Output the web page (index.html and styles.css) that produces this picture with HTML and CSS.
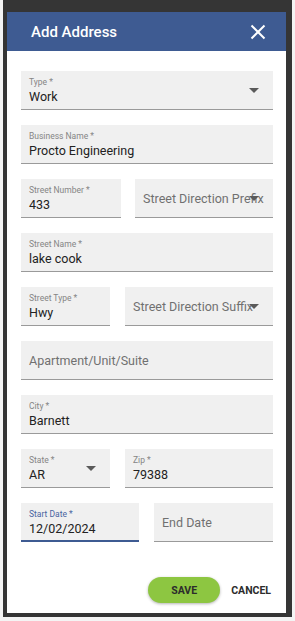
FILE: index.html
```html
<!DOCTYPE html>
<html lang="en">
<head>
    <meta charset="UTF-8">
    <meta name="viewport" content="width=device-width, initial-scale=1.0">
    <title>Add Address</title>
    <link rel="stylesheet" href="styles.css">
</head>
<body>

    <div class="dialog">
        <div class="dialog-header">
            <h1>Add Address</h1>
            <button class="close-btn" aria-label="Close">
                <svg width="16" height="16" viewBox="0 0 16 16">
                    <path d="M1.5 1.5 L14.5 14.5 M14.5 1.5 L1.5 14.5" stroke="#fff" stroke-width="2" fill="none"/>
                </svg>
            </button>
        </div>

        <div class="dialog-body">
            <div class="field select">
                <span class="label">Type *</span>
                <span class="value">Work</span>
                <span class="arrow"></span>
            </div>

            <div class="field">
                <span class="label">Business Name *</span>
                <span class="value">Procto Engineering</span>
            </div>

            <div class="row row-number">
                <div class="field">
                    <span class="label">Street Number *</span>
                    <span class="value">433</span>
                </div>
                <div class="field select empty">
                    <span class="placeholder">Street Direction Prefix</span>
                    <span class="arrow"></span>
                </div>
            </div>

            <div class="field">
                <span class="label">Street Name *</span>
                <span class="value">lake cook</span>
            </div>

            <div class="row row-type">
                <div class="field">
                    <span class="label">Street Type *</span>
                    <span class="value">Hwy</span>
                </div>
                <div class="field select empty">
                    <span class="placeholder">Street Direction Suffix</span>
                    <span class="arrow"></span>
                </div>
            </div>

            <div class="field empty">
                <span class="placeholder">Apartment/Unit/Suite</span>
            </div>

            <div class="field">
                <span class="label">City *</span>
                <span class="value">Barnett</span>
            </div>

            <div class="row row-type">
                <div class="field select">
                    <span class="label">State *</span>
                    <span class="value">AR</span>
                    <span class="arrow"></span>
                </div>
                <div class="field">
                    <span class="label">Zip *</span>
                    <span class="value">79388</span>
                </div>
            </div>

            <div class="row row-date">
                <div class="field focused">
                    <span class="label">Start Date *</span>
                    <span class="value">12/02/2024</span>
                </div>
                <div class="field empty">
                    <span class="placeholder">End Date</span>
                </div>
            </div>
        </div>

        <div class="dialog-actions">
            <button class="save-btn">SAVE</button>
            <button class="cancel-btn">CANCEL</button>
        </div>
    </div>

</body>
</html>
```

FILE: styles.css
```css
body {
    margin: 0;
    padding: 0 3px 4px 3px;
    background-color: #f4f4f4;
    font-family: Roboto, "Liberation Sans", sans-serif;
}

.dialog {
    height: 601px;
    background-color: #fff;
    border-style: solid;
    border-color: #353535;
    border-width: 12px 6px 4px 4px;
    display: flex;
    flex-direction: column;
}

.dialog-header {
    height: 39px;
    background-color: #3e5b92;
    display: flex;
    align-items: center;
    justify-content: space-between;
    padding: 0 20px 0 24px;
}

.dialog-header h1 {
    margin: 0;
    color: #fff;
    font-size: 15px;
    font-weight: 500;
}

.close-btn {
    background: none;
    border: none;
    padding: 0;
    display: flex;
    cursor: pointer;
}

.dialog-body {
    display: flex;
    flex-direction: column;
    gap: 15px;
    padding: 20px 13px 0 14px;
}

.row {
    display: grid;
    gap: 14px;
}

.row-number {
    grid-template-columns: 100px 1fr;
}

.row-type {
    grid-template-columns: 89px 1fr;
    gap: 15px;
}

.row-date {
    grid-template-columns: 118px 1fr;
    gap: 15px;
}

.field {
    position: relative;
    box-sizing: border-box;
    height: 39px;
    background-color: #f0f0f0;
    border-bottom: 1px solid #9a9a9a;
    padding: 6px 8px 0;
    display: flex;
    flex-direction: column;
    overflow: hidden;
}

.field.empty {
    justify-content: center;
    padding-top: 0;
}

.field.focused {
    border-bottom: 2px solid #3e5b92;
}

.label {
    font-size: 8.5px;
    line-height: 10px;
    color: #858585;
}

.field.focused .label {
    color: #4a64a0;
}

.value {
    margin-top: 2px;
    font-size: 12.5px;
    line-height: 15px;
    color: #222;
}

.placeholder {
    font-size: 12.5px;
    color: #707070;
    white-space: nowrap;
}

.arrow {
    position: absolute;
    top: 50%;
    right: 14px;
    width: 0;
    height: 0;
    margin-top: -2px;
    border-left: 5px solid transparent;
    border-right: 5px solid transparent;
    border-top: 5px solid #5a5a5a;
}

.dialog-actions {
    margin-top: auto;
    display: flex;
    justify-content: flex-end;
    align-items: center;
    gap: 3px;
    padding: 0 7px 10px 0;
}

.save-btn {
    width: 72px;
    height: 26px;
    border: none;
    border-radius: 13px;
    background-color: #8dc641;
    box-shadow: 0 1px 3px rgba(0, 0, 0, 0.3);
    color: #2c2c2c;
    font-family: inherit;
    font-size: 10.5px;
    font-weight: 700;
    cursor: pointer;
}

.cancel-btn {
    background: none;
    border: none;
    padding: 6px 8px;
    color: #2c2c2c;
    font-family: inherit;
    font-size: 10.5px;
    font-weight: 700;
    cursor: pointer;
}
```
